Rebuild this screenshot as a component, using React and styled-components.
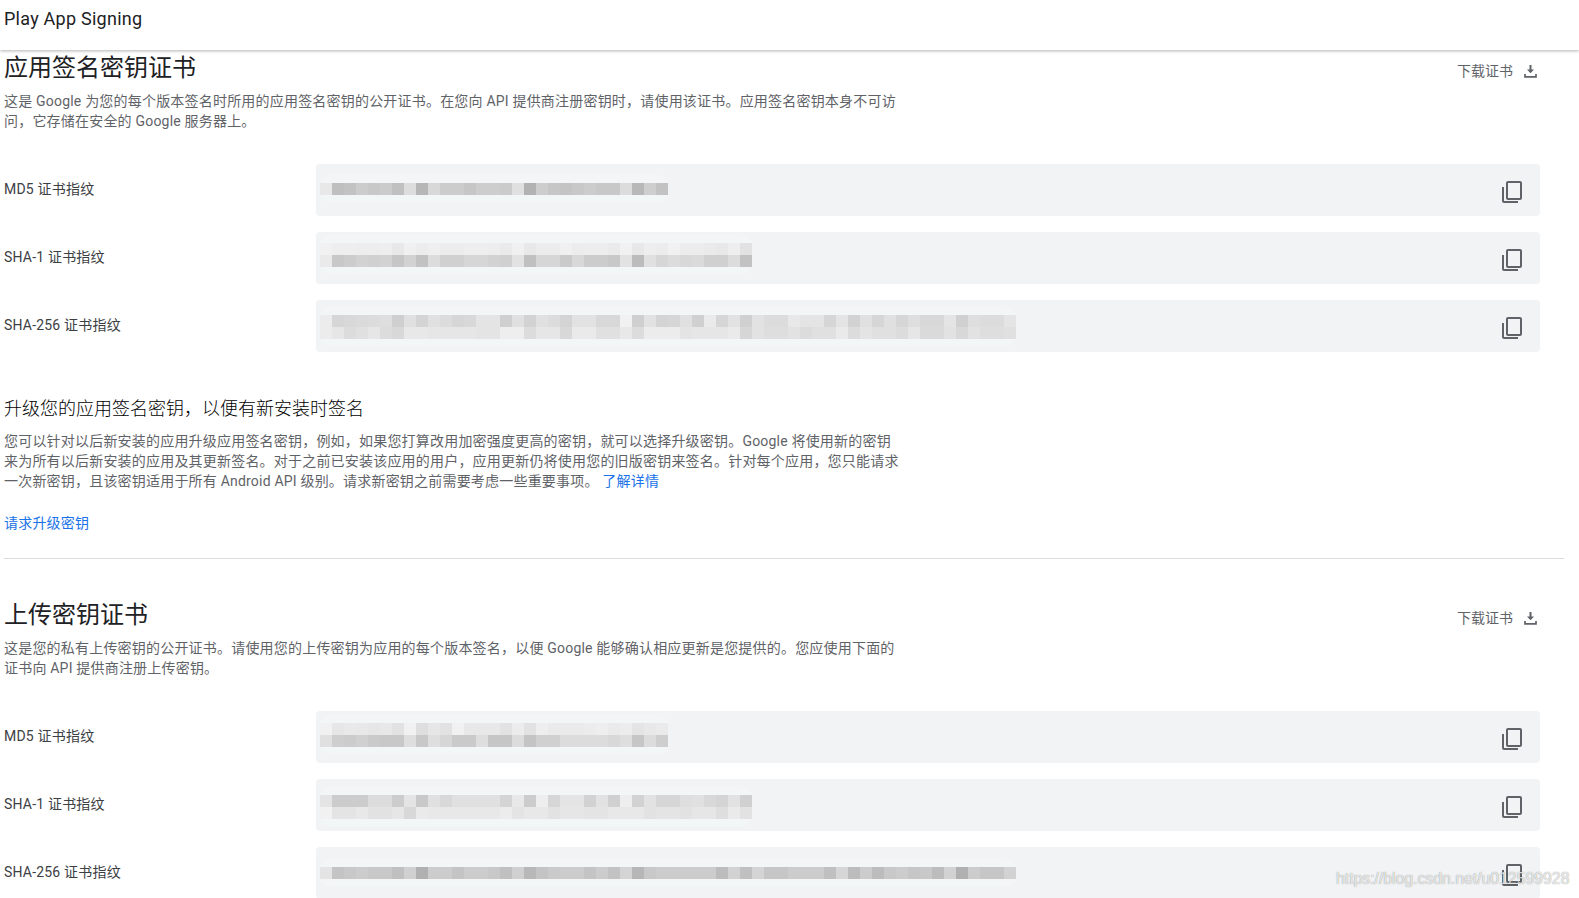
import React from "react";
import styled, { createGlobalStyle } from "styled-components";

const GlobalStyle = createGlobalStyle`
  html, body {
    margin: 0;
    padding: 0;
    background: #ffffff;
  }
  body {
    font-family: Roboto, "Noto Sans CJK SC", sans-serif;
    color: #202124;
  }
`;

const Page = styled.div`
  position: relative;
  height: 898px;
  overflow: hidden;
`;

const Header = styled.header`
  height: 50px;
  padding: 7px 0 0 4px;
  box-sizing: border-box;
  font-size: 18px;
  line-height: 24px;
  letter-spacing: 0.25px;
  color: #202124;
  box-shadow: 0 1px 3px rgba(60, 64, 67, 0.4);
`;

const Content = styled.main`
  width: 1561px;
  padding: 2px 0 0 4px;
`;

const SectionHead = styled.div`
  display: flex;
  justify-content: space-between;
  width: 1533px;
`;

const Title = styled.h2`
  margin: 0;
  font-size: 24px;
  font-weight: 400;
  line-height: 32px;
`;

const DownloadButton = styled.button`
  display: flex;
  align-items: center;
  gap: 11px;
  height: 20px;
  margin-top: 9px;
  padding: 0;
  border: 0;
  background: none;
  font: inherit;
  font-size: 14px;
  color: #5f6368;
`;

const DownloadLabel = styled.span`
  margin-top: -2px;
`;

const Desc = styled.p`
  width: 900px;
  margin: ${(p) => p.$top || 7}px 0 0;
  font-size: 14px;
  line-height: 20px;
  letter-spacing: 0.2px;
  color: #5f6368;
`;

const Fields = styled.div`
  display: flex;
  flex-direction: column;
  gap: 16px;
  margin-top: 33px;
`;

const Row = styled.div`
  display: grid;
  grid-template-columns: 312px 1224px;
  align-items: center;
`;

const Label = styled.div`
  font-size: 14px;
  line-height: 20px;
  letter-spacing: 0.2px;
  color: #3c4043;
  margin-top: -3px;
`;

const Field = styled.div`
  display: flex;
  justify-content: space-between;
  height: 52px;
  padding: ${(p) => p.$top}px 18px 0 4px;
  box-sizing: border-box;
  background: #f1f3f4;
  border-radius: 4px;
`;

const CopyButton = styled.button`
  display: flex;
  height: 22px;
  margin-top: ${(p) => 17 - p.$top}px;
  padding: 0;
  border: 0;
  background: none;
`;

const SubTitle = styled.h3`
  margin: 45px 0 0;
  font-size: 18px;
  font-weight: 300;
  line-height: 24px;
  color: #000000;
`;

const Link = styled.a`
  color: #1a73e8;
  text-decoration: none;
  font-size: 14px;
  line-height: 20px;
  letter-spacing: 0.2px;
`;

const RequestLink = styled(Link)`
  display: block;
  margin-top: 22px;
`;

const Divider = styled.hr`
  width: 1560px;
  height: 1px;
  margin: 25px 0 40px;
  border: 0;
  background: #dadce0;
`;

const Watermark = styled.div`
  position: absolute;
  left: 1336px;
  top: 869px;
  font-family: "Liberation Sans", sans-serif;
  font-size: 16px;
  line-height: 20px;
  letter-spacing: -0.1px;
  color: rgba(255, 255, 255, 0.8);
  text-shadow: 0 0 1px rgba(0, 0, 0, 0.5);
`;

const CELL = 12;

function Mosaic({ rows }) {
  const parsed = rows.map((r) => r.trim().split(/\s+/));
  const width = Math.max(...parsed.map((r) => r.length)) * CELL;
  const height = parsed.length * CELL;
  return (
    <svg
      width={width}
      height={height}
      viewBox={`0 0 ${width} ${height}`}
      shapeRendering="crispEdges"
      style={{ overflow: "visible" }}
    >
      <rect
        x="0"
        y="-8"
        width={width}
        height={height + 16}
        rx="10"
        fill="#f4f6f6"
        fillOpacity="0.8"
        shapeRendering="auto"
      />
      {parsed.map((cells, y) =>
        cells.map((g, x) => (
          <rect
            key={`${y}-${x}`}
            x={x * CELL}
            y={y * CELL}
            width={CELL}
            height={CELL}
            fill={`#${g}${g}${g}`}
          />
        ))
      )}
    </svg>
  );
}

const CopyIcon = () => (
  <svg width="20" height="22" viewBox="0 0 20 22" fill="none" stroke="#5f6368" strokeWidth="2">
    <rect x="5" y="1" width="14" height="17" rx="1" />
    <path d="M1 6v14a1 1 0 0 0 1 1h14" />
  </svg>
);

const DownloadIcon = () => (
  <svg width="13" height="13" viewBox="0 0 13 13" fill="none">
    <path d="M5.5 0h2v4.5H10L6.5 8.3 3 4.5h2.5z" fill="#5f6368" />
    <path d="M1 9v2.8h11V9" stroke="#5f6368" strokeWidth="1.7" />
  </svg>
);

const firstCert = [
  {
    label: "MD5 证书指纹",
    top: 19,
    rows: ["e8 bf c2 cc c8 cb c0 dd b6 d8 cc cc c6 cd cd cb e0 b2 cd c6 c4 c8 cc c8 c8 dc b8 ce c2"],
  },
  {
    label: "SHA-1 证书指纹",
    top: 11,
    rows: [
      "f1 ee ee ed ed ee e8 f0 ec ef ec ec ee ee ed ea f0 e8 ec ec f0 ec ed ed ea f1 e8 ee ec f1 ec ec ea e8 ee e2",
      "ea c8 cc d2 d0 d2 c6 d2 c2 dc d0 d0 d6 d6 d2 d0 e2 c0 d6 d6 ca d8 cc cc c8 e2 bc e0 d6 dc d8 da d0 d0 dc c2",
    ],
  },
  {
    label: "SHA-256 证书指纹",
    top: 15,
    rows: [
      "ec d6 d8 da dc de cf e0 d4 e0 dc d6 d8 e4 e4 cf e0 d2 e0 dc d4 e2 e2 d8 d8 f1 cf e2 d4 d6 e0 d0 ea d6 e2 d0 e2 dc dc e8 e4 e4 d6 e4 d2 e0 d6 e0 d6 de d8 d8 e4 d0 de dc dc e4",
      "ec e6 dc e0 e6 dc d8 e8 e8 e6 e6 e6 e6 e4 e4 ee ee dc e6 e6 d8 ea ea e0 e0 e8 dc ec ec ec e4 e6 e6 e6 ea d6 e2 de de e2 dc e0 e0 ea dc e4 e0 e0 dc e6 da da e2 d8 e2 de de e0",
    ],
  },
];

const secondCert = [
  {
    label: "MD5 证书指纹",
    top: 12,
    rows: [
      "f1 e6 e9 e8 e6 e8 e2 f1 de e6 e2 f1 e8 e8 e8 e2 ec e2 ee ea ea ea ec ee ea ec e4 e8 ea",
      "e0 ce cc d0 ca c8 c8 de c8 de d6 ca ca de c6 c6 dc c4 d0 d0 dc dc dc dc d8 de c6 dc ce",
    ],
  },
  {
    label: "SHA-1 证书指纹",
    top: 16,
    rows: [
      "e4 cc cc cc dc dc cc e4 c8 e0 d8 e0 e0 e0 e0 d4 e8 cc ee d6 e4 e4 d2 e2 d0 ee d2 e2 d6 d6 de e0 d8 d4 e2 d0",
      "f1 e4 e4 e8 e2 e2 e6 d8 ea e8 e8 e8 e8 e8 e8 ec e4 e8 e8 e2 e6 e6 e4 e4 e8 e8 e8 e2 e4 e4 e2 e6 e6 de ea e2",
    ],
  },
  {
    label: "SHA-256 证书指纹",
    top: 20,
    rows: [
      "e4 c4 c8 cc c8 c8 c0 d0 b0 cc cc c4 cc cc c8 c0 d0 b8 c4 ca cc cc c4 cc c2 d4 b6 c8 cc cc cc cc cc bc d2 c0 d4 c6 c6 cc cc cc c0 d6 bc cc bc c8 cc c6 c8 bc d2 b0 cc c6 c6 d2",
    ],
  },
];

function CertFields({ items }) {
  return (
    <Fields>
      {items.map((item) => (
        <Row key={item.label}>
          <Label>{item.label}</Label>
          <Field $top={item.top}>
            <Mosaic rows={item.rows} />
            <CopyButton $top={item.top}>
              <CopyIcon />
            </CopyButton>
          </Field>
        </Row>
      ))}
    </Fields>
  );
}

function CertHead({ title }) {
  return (
    <SectionHead>
      <Title>{title}</Title>
      <DownloadButton>
        <DownloadLabel>下载证书</DownloadLabel>
        <DownloadIcon />
      </DownloadButton>
    </SectionHead>
  );
}

export default function App() {
  return (
    <Page>
      <GlobalStyle />
      <Header>Play App Signing</Header>
      <Content>
        <CertHead title="应用签名密钥证书" />
        <Desc>
          这是 Google 为您的每个版本签名时所用的应用签名密钥的公开证书。在您向 API 提供商注册密钥时，请使用该证书。应用签名密钥本身不可访问，它存储在安全的 Google 服务器上。
        </Desc>
        <CertFields items={firstCert} />
        <SubTitle>升级您的应用签名密钥，以便有新安装时签名</SubTitle>
        <Desc $top={10}>
          您可以针对以后新安装的应用升级应用签名密钥，例如，如果您打算改用加密强度更高的密钥，就可以选择升级密钥。Google 将使用新的密钥来为所有以后新安装的应用及其更新签名。对于之前已安装该应用的用户，应用更新仍将使用您的旧版密钥来签名。针对每个应用，您只能请求一次新密钥，且该密钥适用于所有 Android API 级别。请求新密钥之前需要考虑一些重要事项。{" "}
          <Link href="#">了解详情</Link>
        </Desc>
        <RequestLink href="#">请求升级密钥</RequestLink>
        <Divider />
        <CertHead title="上传密钥证书" />
        <Desc>
          这是您的私有上传密钥的公开证书。请使用您的上传密钥为应用的每个版本签名，以便 Google 能够确认相应更新是您提供的。您应使用下面的证书向 API 提供商注册上传密钥。
        </Desc>
        <CertFields items={secondCert} />
      </Content>
      <Watermark>https://blog.csdn.net/u012599928</Watermark>
    </Page>
  );
}
